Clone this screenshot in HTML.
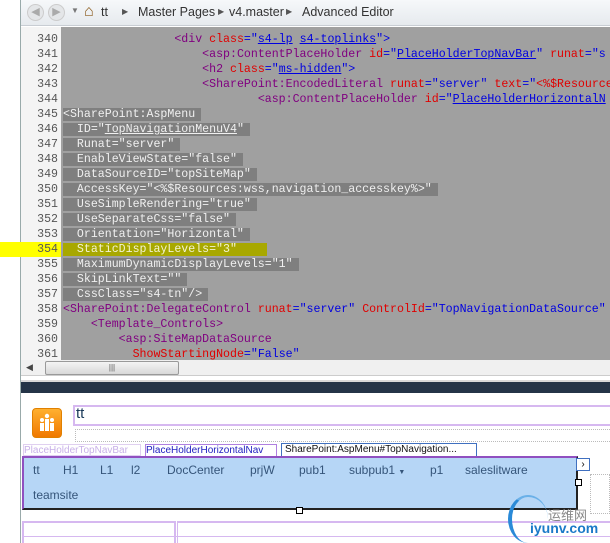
<!DOCTYPE html>
<html><head><style>
*{margin:0;padding:0;box-sizing:border-box}
body{width:610px;height:543px;overflow:hidden;background:#fff;position:relative;font-family:"Liberation Sans",sans-serif}
.abs{position:absolute}
#tb{left:21px;top:0;width:589px;height:26px;background:linear-gradient(#f6f8fa,#e6eaee);border-bottom:1px solid #c8cdd3;font-size:12.5px;color:#333}
#code{left:21px;top:27px;width:589px;height:333px;background:#a0a0a0;overflow:hidden}
#gut{left:0;top:0;width:40px;height:333px;background:#f4f4f4}
.ln{position:absolute;left:0;height:15px;width:600px;font-family:"Liberation Mono",monospace;font-size:11.6px;line-height:15px;white-space:pre}
.ln .n{display:inline-block;width:37px;text-align:right;color:#555;margin-right:5px}
.sel{background:#7f7f7f;color:#f0f0f0;padding-right:6px}
.t{color:#800080}.a{color:#e00000}.v{color:#0000e0}.u{color:#0000e0;text-decoration:underline}
</style></head><body>
<div class="abs" style="left:20px;top:0;width:1px;height:543px;background:#9aa"></div>
<div class="abs" id="tb">
 <div class="abs" style="left:6px;top:4px;width:17px;height:17px;border-radius:50%;background:#e4e6e8;border:1px solid #ccc;color:#aaa;font-size:11px;text-align:center;line-height:15px">◀</div>
 <div class="abs" style="left:27px;top:4px;width:17px;height:17px;border-radius:50%;background:#e4e6e8;border:1px solid #ccc;color:#aaa;font-size:11px;text-align:center;line-height:15px">▶</div>
 <div class="abs" style="left:50px;top:6px;font-size:8px;color:#777">▼</div>
 <div class="abs" style="left:63px;top:3px;font-size:16px;line-height:18px;color:#8a5a1a">⌂</div>
 <div class="abs" style="left:80px;top:5px">tt</div>
 <div class="abs" style="left:101px;top:7px;font-size:8px;color:#555">▶</div>
 <div class="abs" style="left:117px;top:5px">Master Pages</div>
 <div class="abs" style="left:197px;top:7px;font-size:8px;color:#555">▶</div>
 <div class="abs" style="left:208px;top:5px">v4.master</div>
 <div class="abs" style="left:265px;top:7px;font-size:8px;color:#555">▶</div>
 <div class="abs" style="left:281px;top:5px">Advanced Editor</div>
</div>
<div class="abs" id="code">
 <div class="abs" id="gut"></div>
 <div class="ln" style="top:5px"><span class="n">340</span>                <span class="t">&lt;div </span><span class="a">class</span><span class="v">="</span><span class="u">s4-lp</span> <span class="u">s4-toplinks</span><span class="v">"&gt;</span></div>
 <div class="ln" style="top:20px"><span class="n">341</span>                    <span class="t">&lt;asp:ContentPlaceHolder </span><span class="a">id</span><span class="v">="</span><span class="u">PlaceHolderTopNavBar</span><span class="v">" </span><span class="a">runat</span><span class="v">="s</span></div>
 <div class="ln" style="top:35px"><span class="n">342</span>                    <span class="t">&lt;h2 </span><span class="a">class</span><span class="v">="</span><span class="u">ms-hidden</span><span class="v">"&gt;</span></div>
 <div class="ln" style="top:50px"><span class="n">343</span>                    <span class="t">&lt;SharePoint:EncodedLiteral </span><span class="a">runat</span><span class="v">="server" </span><span class="a">text</span><span class="v">="</span><span class="a">&lt;%$Resource</span></div>
 <div class="ln" style="top:65px"><span class="n">344</span>                            <span class="t">&lt;asp:ContentPlaceHolder </span><span class="a">id</span><span class="v">="</span><span class="u">PlaceHolderHorizontalN</span></div>
 <div class="ln" style="top:80px"><span class="n">345</span><span class="sel">&lt;SharePoint:AspMenu</span></div>
 <div class="ln" style="top:95px"><span class="n">346</span><span class="sel">  ID="<u>TopNavigationMenuV4</u>"</span></div>
 <div class="ln" style="top:110px"><span class="n">347</span><span class="sel">  Runat="server"</span></div>
 <div class="ln" style="top:125px"><span class="n">348</span><span class="sel">  EnableViewState="false"</span></div>
 <div class="ln" style="top:140px"><span class="n">349</span><span class="sel">  DataSourceID="topSiteMap"</span></div>
 <div class="ln" style="top:155px"><span class="n">350</span><span class="sel">  AccessKey="&lt;%$Resources:wss,navigation_accesskey%&gt;"</span></div>
 <div class="ln" style="top:170px"><span class="n">351</span><span class="sel">  UseSimpleRendering="true"</span></div>
 <div class="ln" style="top:185px"><span class="n">352</span><span class="sel">  UseSeparateCss="false"</span></div>
 <div class="ln" style="top:200px"><span class="n">353</span><span class="sel">  Orientation="Horizontal"</span></div>
 <div class="ln" style="top:215px"><span class="n" style="background:#ffff00;color:#555;width:40px;margin-right:2px;padding-right:3px">354</span><span class="sel" style="background:#a8a800;color:#f4f4d0;padding-right:30px">  StaticDisplayLevels="3"</span></div>
 <div class="ln" style="top:230px"><span class="n">355</span><span class="sel">  MaximumDynamicDisplayLevels="1"</span></div>
 <div class="ln" style="top:245px"><span class="n">356</span><span class="sel">  SkipLinkText=""</span></div>
 <div class="ln" style="top:260px"><span class="n">357</span><span class="sel">  CssClass="s4-tn"/&gt;</span></div>
 <div class="ln" style="top:275px"><span class="n">358</span><span class="t">&lt;SharePoint:DelegateControl </span><span class="a">runat</span><span class="v">="server" </span><span class="a">ControlId</span><span class="v">="TopNavigationDataSource"</span></div>
 <div class="ln" style="top:290px"><span class="n">359</span>    <span class="t">&lt;Template_Controls&gt;</span></div>
 <div class="ln" style="top:305px"><span class="n">360</span>        <span class="t">&lt;asp:SiteMapDataSource</span></div>
 <div class="ln" style="top:320px"><span class="n">361</span>          <span class="a">ShowStartingNode</span><span class="v">="False"</span></div>
</div>
<div class="abs" style="left:0;top:242px;width:21px;height:15px;background:#ffff00"></div>
<div class="abs" style="left:21px;top:360px;width:589px;height:16px;background:#f0f0f0;border-bottom:1px solid #ccc"></div>
<div class="abs" style="left:26px;top:362px;font-size:9px;color:#444">◀</div>
<div class="abs" style="left:45px;top:361px;width:134px;height:14px;border:1px solid #999;border-radius:2px;background:linear-gradient(#f4f4f4,#d8d8d8);font-size:8px;text-align:center;line-height:12px;color:#555">|||</div>
<div class="abs" style="left:21px;top:380px;width:589px;height:2px;background:#d8d8d8"></div>
<div class="abs" style="left:21px;top:382px;width:589px;height:11px;background:#243447"></div>
<div class="abs" style="left:32px;top:408px;width:30px;height:30px;border-radius:4px;background:linear-gradient(#ffb030,#f07800);border:1px solid #e08000"></div>
<svg class="abs" style="left:32px;top:408px" width="30" height="30" viewBox="0 0 30 30"><g fill="#fff"><circle cx="15" cy="8" r="2.2"/><circle cx="10" cy="12" r="2"/><circle cx="20" cy="12" r="2"/><rect x="13" y="11" width="4" height="12"/><rect x="8" y="15" width="4" height="8"/><rect x="18" y="15" width="4" height="8"/></g></svg>
<div class="abs" style="left:73px;top:405px;width:537px;height:21px;border:2px solid #d6b8f0;border-right:none"></div>
<div class="abs" style="left:76px;top:405px;font-size:15px;color:#1a3a5a">tt</div>
<div class="abs" style="left:75px;top:429px;width:535px;height:13px;border:1px dotted #bbb;border-right:none"></div>
<div class="abs" style="left:23px;top:444px;width:118px;height:12px;font-size:10px;color:#c8b0e8;line-height:12px;border:1px solid #e0d0f0">PlaceHolderTopNavBar</div>
<div class="abs" style="left:145px;top:444px;width:132px;height:12px;font-size:10px;color:#2020c0;line-height:11px;border:1px solid #b080e0;border-bottom:none;background:#fff">PlaceHolderHorizontalNav</div>
<div class="abs" style="left:281px;top:443px;width:196px;height:13px;font-size:10px;color:#111;line-height:12px;border:1px solid #4070c0;border-bottom:none;background:#fff;padding-left:3px">SharePoint:AspMenu#TopNavigation...</div>
<div class="abs" style="left:22px;top:456px;width:556px;height:54px;background:#b6d6f6;border:2px solid #9050c0;border-right-color:#222;border-bottom-color:#222"></div>
<div class="abs" style="top:463px;left:0;font-size:12px;color:#35557a;width:610px;height:40px">
 <span class="abs" style="left:33px">tt</span><span class="abs" style="left:63px">H1</span><span class="abs" style="left:100px">L1</span><span class="abs" style="left:131px">l2</span><span class="abs" style="left:167px">DocCenter</span><span class="abs" style="left:250px">prjW</span><span class="abs" style="left:299px">pub1</span><span class="abs" style="left:349px">subpub1 <small style="font-size:7px">▼</small></span><span class="abs" style="left:430px">p1</span><span class="abs" style="left:465px">saleslitware</span><span class="abs" style="left:33px;top:25px">teamsite</span>
</div>
<div class="abs" style="left:576px;top:458px;width:14px;height:13px;border:1px solid #4070c0;background:#fff;font-size:10px;line-height:11px;text-align:center">›</div>
<div class="abs" style="left:575px;top:479px;width:7px;height:7px;border:1px solid #000;background:#fff"></div>
<div class="abs" style="left:296px;top:507px;width:7px;height:7px;border:1px solid #000;background:#fff"></div>
<div class="abs" style="left:590px;top:474px;width:20px;height:40px;border:1px dotted #bbb"></div>
<div class="abs" style="left:22px;top:521px;width:154px;height:22px;border:2px solid #d6b8f0;border-bottom:none"></div>
<div class="abs" style="left:177px;top:521px;width:433px;height:22px;border-top:2px solid #d6b8f0;border-left:1px solid #d6b8f0"></div>
<div class="abs" style="left:22px;top:536px;width:588px;height:1px;background:#d6b8f0"></div>
<div class="abs" style="left:508px;top:495px;width:40px;height:48px;border-radius:50%;border-left:4px solid #2a8ad8;border-top:2px solid #6ab0e8"></div>
<div class="abs" style="left:548px;top:505px;font-size:13px;color:#888;font-family:'Noto Sans CJK SC',sans-serif">运维网</div>
<div class="abs" style="left:530px;top:520px;font-size:14px;font-weight:bold;color:#1a7ac8">iyunv.com</div>
</body></html>
